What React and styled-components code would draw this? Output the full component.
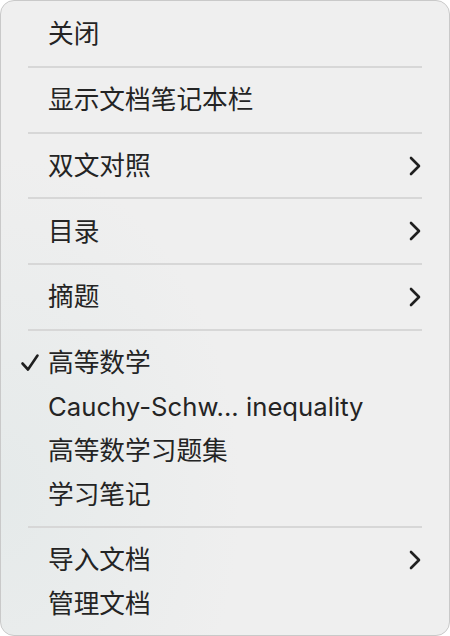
import React from 'react';
import styled, {createGlobalStyle} from 'styled-components';

const GlobalStyle = createGlobalStyle`
    html, body {
        margin: 0;
        padding: 0;
        background: #ffffff;
    }
    * {
        box-sizing: border-box;
    }
`;

// 菜单结构：每个分组之间用分隔线隔开
const sections = [
    [{label: '关闭'}],
    [{label: '显示文档笔记本栏'}],
    [{label: '双文对照', sub: true}],
    [{label: '目录', sub: true}],
    [{label: '摘题', sub: true}],
    [
        {label: '高等数学', checked: true},
        {label: 'Cauchy-Schw... inequality'},
        {label: '高等数学习题集'},
        {label: '学习笔记'},
    ],
    [
        {label: '导入文档', sub: true},
        {label: '管理文档'},
    ],
];

function CheckIcon() {
    return (
        <svg width="20" height="20" viewBox="0 0 20 20" fill="none">
            <path d="M2.5 10.5 L8 16.5 L17.5 2.5" stroke="#1f1f1f" strokeWidth="2.6"
                  strokeLinecap="round" strokeLinejoin="round"/>
        </svg>
    );
}

function ChevronIcon() {
    return (
        <svg width="14" height="20" viewBox="0 0 14 20" fill="none">
            <path d="M3 2 L11 10 L3 18" stroke="#1f1f1f" strokeWidth="2.6"
                  strokeLinecap="round" strokeLinejoin="round"/>
        </svg>
    );
}

function App() {
    return (
        <>
            <GlobalStyle/>
            <Menu>
                {sections.map((items, i) => (
                    <React.Fragment key={i}>
                        {i > 0 && <Separator/>}
                        {items.map((item) => (
                            <Item key={item.label}>
                                <Check>{item.checked && <CheckIcon/>}</Check>
                                <Label>{item.label}</Label>
                                {item.sub && <Arrow><ChevronIcon/></Arrow>}
                            </Item>
                        ))}
                    </React.Fragment>
                ))}
            </Menu>
        </>
    );
}

export default App;

const Menu = styled.div`
    display: flex;
    flex-direction: column;
    width: 450px;
    height: 636px;
    padding: 11px 0 9px;
    border-radius: 14px;
    border: 1px solid #c9c9c9;
    background:
        radial-gradient(ellipse 240px 340px at 0% 78%, rgba(214, 226, 226, 0.4), rgba(214, 226, 226, 0) 100%),
        #efefef;
    font-family: "Inter", "Noto Sans CJK SC", sans-serif;
    color: #242424;
    overflow: hidden;
    `;

const Item = styled.div`
    display: flex;
    align-items: center;
    height: 44px;
    padding: 0 27px 0 19px;
    `;

const Check = styled.div`
    display: flex;
    align-items: center;
    width: 28px;
    height: 20px;
    `;

const Label = styled.div`
    flex: 1;
    font-size: 25.7px;
    line-height: 1;
    white-space: nowrap;
    `;

const Arrow = styled.div`
    display: flex;
    align-items: center;
    `;

const Separator = styled.div`
    height: 2px;
    margin: 10px 27px 10px 27px;
    background: #d7d7d7;
    `;
